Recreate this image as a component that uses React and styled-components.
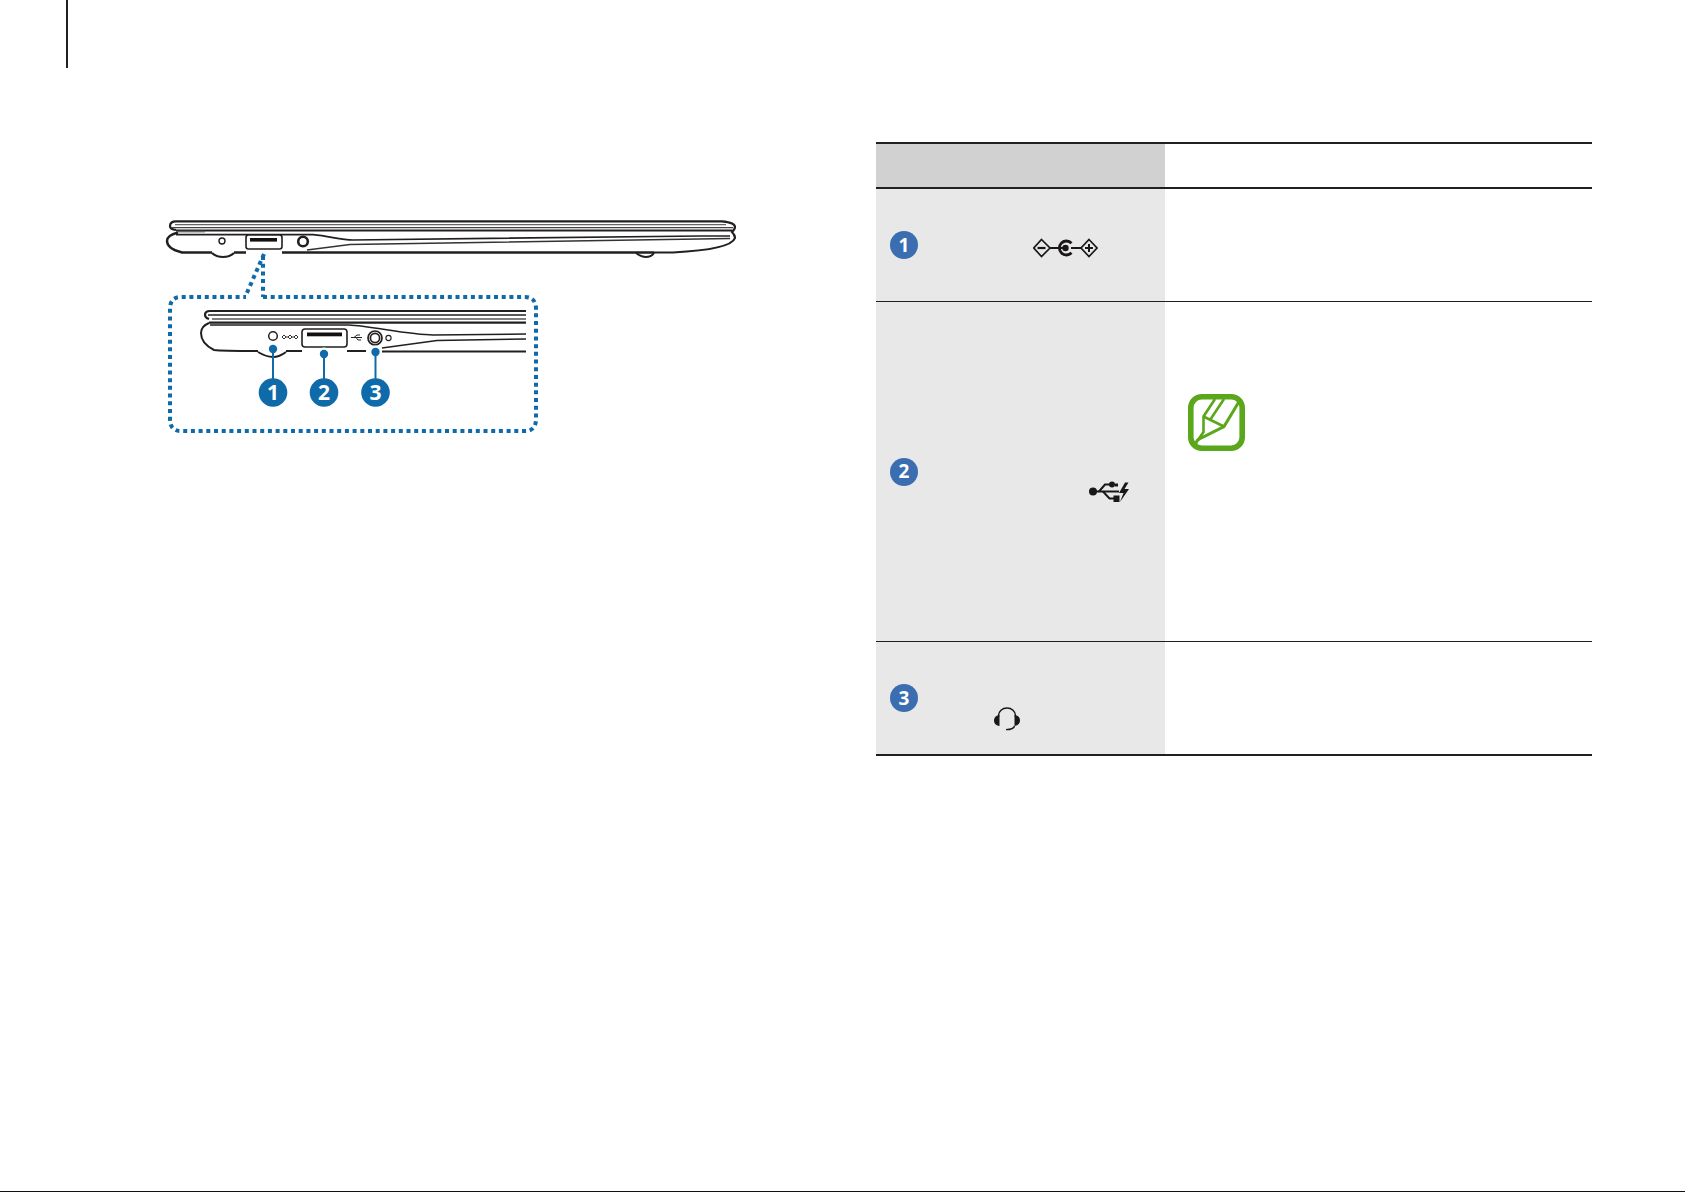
import React from 'react'
import styled, { createGlobalStyle } from 'styled-components'

const GlobalStyle = createGlobalStyle`
  html, body {
    margin: 0;
    padding: 0;
    background: #fff;
  }
`

const Page = styled.div`
  width: 1685px;
  height: 1192px;
  box-sizing: border-box;
  overflow: hidden;
  background: #fff;
  border-bottom: 1px solid #111;
`

const PageRule = styled.div`
  width: 2px;
  height: 68px;
  margin-left: 66px;
  background: #231f20;
`

const Content = styled.div`
  display: flex;
  padding-top: 74px;
`

const FigureColumn = styled.div`
  width: 876px;
  padding: 73px 0 0 160px;
  box-sizing: border-box;
  flex: none;
`

const Figure = styled.svg`
  display: block;
`

const Table = styled.div`
  width: 716px;
  flex: none;
  border-top: 2px solid #231f20;
  border-bottom: 2px solid #231f20;
`

const Row = styled.div`
  display: grid;
  grid-template-columns: 289px 1fr;
  height: ${({ $height }) => $height}px;
  box-sizing: border-box;
  border-bottom: ${({ $line }) => $line}px solid #231f20;
`

const LabelCell = styled.div`
  display: flex;
  align-items: center;
  padding-left: 14px;
  background: ${({ $head }) => ($head ? '#d1d1d1' : '#e8e8e8')};
`

const BodyCell = styled.div`
  padding: 92px 0 0 23px;
`

const Badge = styled.span`
  width: 28px;
  height: 28px;
  flex: none;
  border-radius: 50%;
  display: flex;
  align-items: center;
  justify-content: center;
  background: #3a6eb0;
  color: #fff;
  font: 700 19px/1 "Open Sans", sans-serif;
`

const PortIcon = styled.svg`
  display: block;
  flex: none;
  margin-left: ${({ $left }) => $left}px;
  margin-top: ${({ $drop }) => $drop}px;
`

const FigureLabel = styled.text`
  fill: #fff;
  font: 700 21px "Open Sans", sans-serif;
  text-anchor: middle;
`

const DcIcon = () => (
  <PortIcon $left={115} $drop={6} width="65" height="20" viewBox="0 0 65 20" fill="none" stroke="#1a1718">
    <path d="M8.5 1.5L17 10L8.5 18.5L.8 10Z" strokeWidth="1.7" />
    <path d="M4.5 10H12.5" strokeWidth="2.2" />
    <path d="M56 1.5L64 10L56 18.5L48 10Z" strokeWidth="1.7" />
    <path d="M52 10H60M56 6V14" strokeWidth="2" />
    <path d="M17 10H32M38 10H48" strokeWidth="1.8" />
    <path d="M38.5 5.2A7 7 0 1 0 38.5 14.8" strokeWidth="2.8" />
    <circle cx="32.5" cy="10" r="3.2" fill="#1a1718" stroke="none" />
  </PortIcon>
)

const UsbIcon = () => (
  <PortIcon $left={171} $drop={41} width="40" height="22" viewBox="0 0 40 22" fill="none" stroke="#1a1718">
    <circle cx="4" cy="10.5" r="4" fill="#1a1718" stroke="none" />
    <path d="M4 10.5H30" strokeWidth="2" />
    <path d="M10 10.5L16 3.5H22" strokeWidth="2" />
    <circle cx="23" cy="3.5" r="3" fill="#1a1718" stroke="none" />
    <path d="M14 10.5L20.5 17.5H26" strokeWidth="2" />
    <path d="M24.5 14.5H30.5V21H24.5Z" fill="#1a1718" stroke="none" />
    <path d="M29 2.5V5.5H26V2.5Z" fill="#1a1718" stroke="none" />
    <path d="M36 1.5L30 12H34.5L31 21L40 8H35.5L39.5 1.5Z" fill="#1a1718" stroke="none" />
  </PortIcon>
)

const HeadsetIcon = () => (
  <PortIcon $left={76} $drop={41} width="26" height="24" viewBox="0 0 26 24" fill="none" stroke="#1a1718">
    <path d="M4.5 10V8.5A8.5 7.5 0 0 1 21.5 8.5V10" strokeWidth="1.5" />
    <path d="M5.5 8C1.5 8.5 0 11 0 13.5S1.5 18.5 5.5 19Z" fill="#1a1718" stroke="none" />
    <path d="M20.5 8C24.5 8.5 26 11 26 13.5S24.5 18.5 20.5 19Z" fill="#1a1718" stroke="none" />
    <path d="M20.5 19C20 21.5 17.5 22.6 12 22.6" strokeWidth="1.4" />
  </PortIcon>
)

const NoteIcon = () => (
  <svg width="57" height="57" viewBox="0 0 57 57" fill="none" stroke="#5ba71b" style={{ display: 'block' }}>
    <rect x="2.8" y="2.8" width="51.4" height="51.4" rx="11" strokeWidth="5.6" />
    <path d="M8 50C8 46 11 44.5 15 43L36 32.5L52 6" strokeWidth="3" />
    <path d="M10 46L15.5 38V22.5L27 5" strokeWidth="2.6" />
    <path d="M15.5 22.5L36 32.5" strokeWidth="2.6" />
    <path d="M36 5L22 26" strokeWidth="2.6" />
  </svg>
)

const BLUE = '#0f6aa9'
const INK = '#231f20'

const LaptopFigure = () => (
  <Figure width="590" height="225" viewBox="160 215 590 225" fill="none">
    {/* full side view */}
    <g stroke={INK}>
      <path d="M722 221.3H176C171 221.3 170 224 170 226C170 228 172 229.5 176 230" strokeWidth="2.2" />
      <path d="M722 221.3C730 222 735 224 735 227C735 229 733 231 732 232C734 234 735 236 735 238C733 244 720 250 673 252.5H654" strokeWidth="2.2" />
      <path d="M175 224.6H726" stroke="#666" strokeWidth="1.4" />
      <path d="M172 227.6H733" stroke="#444" strokeWidth="1.4" />
      <path d="M176 230.5H732" strokeWidth="1.8" />
      <path d="M178 232.5C172 234 167 237 167 241C167 246 172 250 182 252.5H212M234 252.5H246M282 252.5H654" strokeWidth="2.4" />
      <path d="M178 231.6H205" stroke="#666" strokeWidth="1.6" />
      <path d="M176 234.6H313C330 236 340 240 353 240L700 236H730" strokeWidth="1.7" />
      <path d="M307 250L350 244.5L730 238.5" stroke="#333" strokeWidth="1.5" />
      <path d="M212 253C215 256 219 257 223 257C227 257 231 256 234 253" strokeWidth="2" />
      <path d="M636 253C640 256 644 257 646 257C650 257 652 256 654 253" strokeWidth="2" />
      <circle cx="222" cy="241" r="3" fill="#fff" strokeWidth="1.4" />
      <rect x="246" y="235" width="36" height="14" rx="2.5" fill="#fff" strokeWidth="1.6" />
      <rect x="250" y="238" width="27" height="3.6" fill="#111" stroke="none" />
      <circle cx="303" cy="241.5" r="4.8" fill="#fff" strokeWidth="2.6" />
    </g>

    {/* dotted callout */}
    <g stroke={BLUE} strokeWidth="4" strokeDasharray="4 3.7">
      <path d="M264 254L246 295" />
      <path d="M263 256V297" />
      <path d="M263 297H525Q536 297 536 309V419Q536 431 525 431H181Q170 431 170 419V309Q170 297 181 297H246" />
    </g>

    {/* enlarged view */}
    <g stroke={INK}>
      <path d="M526 311H210C206 311 205 313 205 315C205 317 206 318 209 319" strokeWidth="2.2" />
      <path d="M526 315H208" strokeWidth="1.3" />
      <path d="M526 319H212" stroke="#555" strokeWidth="1.5" />
      <path d="M526 322.7H209" strokeWidth="2.2" />
      <path d="M209 323C204 325 201 328 201 333C201 338 204 345 214 350C222 351 235 351 258 351M286 351H302M347 351H366M382 351.5H526" strokeWidth="2" />
      <path d="M210 325H349C370 326 410 335 433 335L526 334" strokeWidth="1.5" />
      <path d="M382 348L437 340.5L526 339" strokeWidth="1.5" />
      <path d="M258 352C263 355 268 357 273 357C278 357 282 355 286 352" strokeWidth="2" />
      <circle cx="273" cy="336" r="4.3" fill="#fff" strokeWidth="1.5" />
      <rect x="302" y="329" width="45" height="18" rx="3" fill="#fff" strokeWidth="1.6" />
      <rect x="307" y="332.5" width="35" height="3.8" fill="#111" stroke="none" />
      <circle cx="375" cy="338" r="7" fill="#fff" strokeWidth="1.7" />
      <circle cx="375" cy="338" r="4.6" fill="#fff" strokeWidth="1.7" />
      <circle cx="388.5" cy="338" r="2.6" fill="#fff" strokeWidth="1.1" />
      <path d="M282 337H297" stroke="#333" strokeWidth="1" />
      <path d="M284 335L286 337L284 339L282 337ZM290 335L292 337L290 339L288 337ZM296 335L298 337L296 339L294 337Z" fill="#fff" stroke="#333" strokeWidth="1" />
      <path d="M351 337.5H362M354 337.5L357 335H360M356 337.5L358 340H361" stroke="#222" strokeWidth="1" />
    </g>

    {/* numbered pointers */}
    {[[273, 349, 1], [324, 354, 2], [375.5, 352, 3]].map(([x, y, n]) => (
      <g key={n}>
        <circle cx={x} cy={y} r="6.5" fill="#fff" />
        <path d={`M${x} ${y}V392`} stroke={BLUE} strokeWidth="2" />
        <circle cx={x} cy={y} r="4.2" fill={BLUE} />
        <circle cx={x} cy="392.5" r="14.3" fill={BLUE} />
        <FigureLabel x={x} y="400">{n}</FigureLabel>
      </g>
    ))}
  </Figure>
)

const rows = [
  { n: 1, height: 113, line: 1, icon: <DcIcon /> },
  { n: 2, height: 340, line: 1, icon: <UsbIcon />, note: true },
  { n: 3, height: 112, line: 0, icon: <HeadsetIcon /> },
]

export default function App() {
  return (
    <Page>
      <GlobalStyle />
      <PageRule />
      <Content>
        <FigureColumn>
          <LaptopFigure />
        </FigureColumn>
        <Table>
          <Row $height={45} $line={2}>
            <LabelCell $head />
            <div />
          </Row>
          {rows.map((row) => (
            <Row key={row.n} $height={row.height} $line={row.line}>
              <LabelCell>
                <Badge>{row.n}</Badge>
                {row.icon}
              </LabelCell>
              <BodyCell>{row.note && <NoteIcon />}</BodyCell>
            </Row>
          ))}
        </Table>
      </Content>
    </Page>
  )
}
